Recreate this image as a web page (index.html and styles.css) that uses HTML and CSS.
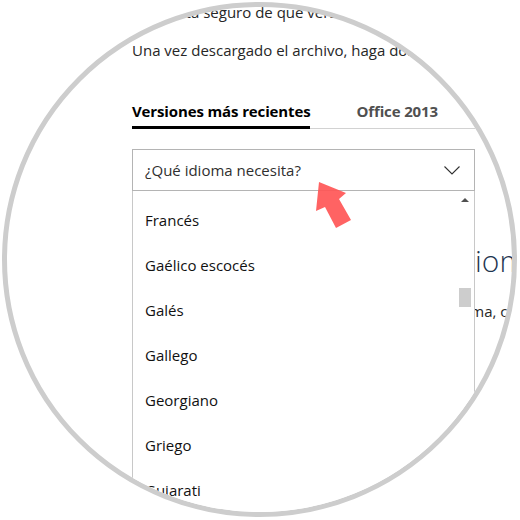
FILE: index.html
```html
<!DOCTYPE html>
<html lang="es">
<head>
  <meta charset="UTF-8">
  <meta name="viewport" content="width=device-width, initial-scale=1.0">
  <title>Descargar Office</title>
  <link rel="stylesheet" href="styles.css">
</head>
<body>
  <div class="lens">
    <div class="page">
      <p class="intro">Si no está seguro de que versión de Office tiene instalada, consulte la ayuda.</p>
      <p class="intro second">Una vez descargado el archivo, haga doble clic en él para instalarlo.</p>

      <div class="tabs">
        <span class="tab active">Versiones más recientes</span>
        <span class="tab">Office 2013</span>
      </div>

      <div class="select-wrap">
        <div class="select">
          <span>¿Qué idioma necesita?</span>
          <svg class="chevron" width="16" height="9" viewBox="0 0 16 9">
            <polyline points="0.5,0.5 8,8 15.5,0.5" fill="none" stroke="#333" stroke-width="1.1"/>
          </svg>
        </div>
        <div class="dropdown">
          <ul class="options">
            <li>Francés</li>
            <li>Gaélico escocés</li>
            <li>Galés</li>
            <li>Gallego</li>
            <li>Georgiano</li>
            <li>Griego</li>
            <li>Gujarati</li>
            <li>Hebreo</li>
          </ul>
          <div class="scrollbar">
            <div class="scroll-up"><span class="tri"></span></div>
            <div class="thumb"></div>
          </div>
        </div>
      </div>

      <h2 class="heading">Descargar Office en un idioma</h2>
      <p class="text">Si prefiere usar Office con la interfaz en otro idioma, consulte la lista.</p>
    </div>

    <!-- flecha de anotación -->
    <svg class="pointer" width="45" height="55" viewBox="0 0 45 55">
      <polygon points="9,4 36,15 29,21 41,42 26,50 15,29 6,33" fill="#ff5656" fill-opacity="0.92"/>
    </svg>
  </div>
</body>
</html>
```

FILE: styles.css
```css
* {
  margin: 0;
  padding: 0;
  box-sizing: border-box;
}

body {
  font-family: "Open Sans", "Noto Sans", sans-serif;
  background: #fff;
  color: #262626;
}

.lens {
  position: relative;
  width: 515px;
  height: 515px;
  margin: 2px 0 0 2px;
  border: 5px solid #cdcdcd;
  border-radius: 50%;
  overflow: hidden;
  background: #fff;
}

.page {
  padding-left: 125px;
  white-space: nowrap;
}

.intro {
  font-size: 15px;
  line-height: 20px;
  margin-top: -5px;
}

.intro.second {
  margin-top: 18px;
}

.tabs {
  display: flex;
  gap: 46px;
  margin-top: 40px;
  border-bottom: 1px solid #d2d2d2;
  width: 600px;
}

.tab {
  font-size: 15px;
  font-weight: 700;
  line-height: 22px;
  letter-spacing: -0.13px;
  color: #505050;
  padding-bottom: 4px;
  border-bottom: 3px solid transparent;
  margin-bottom: -1px;
}

.tab.active {
  color: #000;
  border-bottom-color: #000;
}

.select-wrap {
  position: relative;
  width: 343px;
  margin-top: 20px;
}

.select {
  display: flex;
  align-items: center;
  justify-content: space-between;
  height: 42px;
  padding: 0 14px 0 12px;
  border: 1px solid #b4b4b4;
  font-size: 15px;
  color: #2f2f2f;
}

.chevron {
  display: block;
  margin-top: 1px;
}

.dropdown {
  position: absolute;
  top: 100%;
  left: 0;
  width: 343px;
  height: 400px;
  display: flex;
  background: #fff;
  border: 1px solid #c8c8c8;
  border-top: none;
  z-index: 1;
}

.options {
  flex: 1;
  list-style: none;
  padding-top: 7px;
}

.options li {
  height: 45px;
  line-height: 45px;
  padding-left: 12px;
  font-size: 15px;
  color: #111;
}

.scrollbar {
  width: 16px;
  margin-right: 1px;
}

.scroll-up {
  height: 17px;
  padding-top: 7px;
  display: flex;
  justify-content: center;
}

.tri {
  width: 0;
  height: 0;
  border-left: 4px solid transparent;
  border-right: 4px solid transparent;
  border-bottom: 4px solid #505050;
}

.thumb {
  width: 12px;
  height: 19px;
  margin: 80px 0 0 2px;
  background: #cdcdcd;
}

.heading {
  font-size: 30px;
  font-weight: 300;
  line-height: 38px;
  letter-spacing: 0.1px;
  color: #1e3550;
  margin-top: 51px;
}

.text {
  font-size: 15px;
  line-height: 22px;
  margin-top: 20px;
}

.pointer {
  position: absolute;
  left: 303px;
  top: 171px;
  z-index: 2;
}
```
